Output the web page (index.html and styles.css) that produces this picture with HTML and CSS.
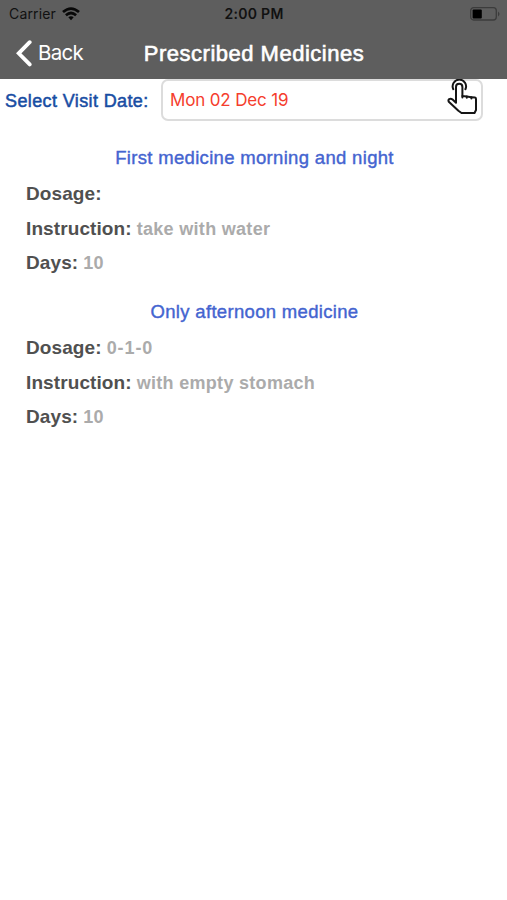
FILE: index.html
```html
<!DOCTYPE html>
<html lang="en">
<head>
<meta charset="utf-8">
<title>Prescribed Medicines</title>
<link rel="stylesheet" href="styles.css">
</head>
<body>
<header class="header">
  <div class="status">
    <div class="carrier"><span class="carrier-name">Carrier</span>
      <svg class="wifi" width="18" height="14" viewBox="0 0 18 14" fill="none" stroke="#080808" stroke-width="2.7"><path d="M1 5.1Q9-2 17 5.1M3.9 8.2Q9 3.8 14.1 8.2"/><path d="M6.3 10.3Q9 8 11.7 10.3L9 13.2Z" fill="#080808" stroke="none"/></svg>
    </div>
    <span class="time">2:00 PM</span>
    <svg class="battery" width="30" height="14" viewBox="0 0 30 14"><rect x=".7" y=".7" width="25.6" height="12.3" rx="3" fill="none" stroke="#3c3c3c" stroke-width="1.3"/><rect x="2.6" y="2.4" width="9.2" height="9" rx="1" fill="#000"/><path d="M28 4.5Q31 7 28 9.5Z" fill="#3c3c3c"/></svg>
  </div>
  <nav class="nav">
    <a class="back"><svg width="16" height="27" viewBox="0 0 16 27" fill="none" stroke="#fff" stroke-width="3.8" stroke-linecap="round"><path d="M13.7 2.2 2.7 13.3 13.7 24.4"/></svg><span class="back-text">Back</span></a>
    <h1 class="title">Prescribed Medicines</h1>
  </nav>
</header>
<main>
  <div class="visit">
    <label class="visit-label">Select Visit Date:</label>
    <div class="date"><span class="date-text">Mon 02 Dec 19</span>
      <svg class="hand" width="32" height="36" viewBox="0 0 32 36" fill="none" stroke="#151515" stroke-width="2" stroke-linejoin="round" stroke-linecap="round"><path d="M6.3 10.2A6.7 6.7 0 1 1 18.4 10.2"/><path d="M9 23.7V8Q9 4.8 12.2 4.8T15.4 8V17L19.8 17.6L24.4 18.2L28 18.6Q29 18.7 29 20V31L27.5 34H14.5L11.4 31.8L1.8 22.8Q.9 21.1 2.2 20.1Q3.8 19.3 5.3 20.3Z"/><path d="M15.4 17V18.4M19.8 17.6V18.8M24.4 18.2V19.4"/></svg>
    </div>
  </div>
  <section class="medicine">
    <h2 class="name">First medicine morning and night</h2>
    <div class="row"><span class="key">Dosage:</span></div>
    <div class="row"><span class="key">Instruction:</span><span class="value">take with water</span></div>
    <div class="row"><span class="key">Days:</span><span class="value">10</span></div>
  </section>
  <section class="medicine">
    <h2 class="name">Only afternoon medicine</h2>
    <div class="row"><span class="key">Dosage:</span><span class="value value-dose">0-1-0</span></div>
    <div class="row"><span class="key">Instruction:</span><span class="value">with empty stomach</span></div>
    <div class="row"><span class="key">Days:</span><span class="value">10</span></div>
  </section>
</main>
</body>
</html>
```
FILE: styles.css
```css
* { box-sizing: border-box; }
body { margin: 0; background: #fff; font-family: "Liberation Sans", Arial, sans-serif; }
.header { height: 79px; background: #5e5e5e; }
.status { height: 27px; display: grid; grid-template-columns: 1fr auto 1fr; align-items: center; padding: 0 7px 0 9px; font: 500 14px/27px Inter, sans-serif; color: #111; }
.carrier { display: flex; align-items: center; gap: 6px; height: 27px; }
.carrier-name { font-weight: 400; font-size: 14px; letter-spacing: .15px; }
.time { font-weight: 600; letter-spacing: .3px; margin-right: 1px; }
.battery { justify-self: end; }
.nav { height: 52px; display: grid; grid-template-columns: 128px 1fr 127px; align-items: center; color: #fff; }
.back { display: flex; align-items: center; gap: 6px; padding-left: 16px; font: 400 20.5px/30px Inter, sans-serif; letter-spacing: -.7px; }
.title { margin: 2px 0 0; text-align: center; white-space: nowrap; font-size: 22px; line-height: 30px; font-weight: 400; letter-spacing: .5px; -webkit-text-stroke: .6px #fff; }
.visit { display: flex; height: 42px; align-items: center; padding-left: 5px; }
.visit-label { width: 156px; padding-top: 2px; white-space: nowrap; font-size: 18px; letter-spacing: .38px; color: #184da3; -webkit-text-stroke: .5px #184da3; }
.date { width: 322px; height: 42px; border: 2px solid #dcdcdc; border-radius: 7px; display: flex; align-items: flex-start; justify-content: space-between; padding: 0 2px 0 7px; color: #f53d2d; font: 400 17px/38px Inter, sans-serif; letter-spacing: -.15px; }
.hand { margin-top: -2px; }
.medicine { height: 154px; padding: 19px 26px 0; }
.name { margin: 0 -28px 0 -26px; height: 36px; line-height: 36px; text-align: center; font-size: 18.5px; font-weight: 400; letter-spacing: .32px; color: #4464d0; -webkit-text-stroke: .4px #4464d0; }
.row { display: flex; align-items: baseline; gap: 5px; height: 35px; line-height: 35px; white-space: nowrap; }
.row:last-child { line-height: 34px; }
.key { font-size: 19px; font-weight: 700; letter-spacing: .1px; color: #505050; }
.value { font-size: 18px; font-weight: 700; letter-spacing: .3px; color: #ababab; }
.value-dose { letter-spacing: .9px; }
```
